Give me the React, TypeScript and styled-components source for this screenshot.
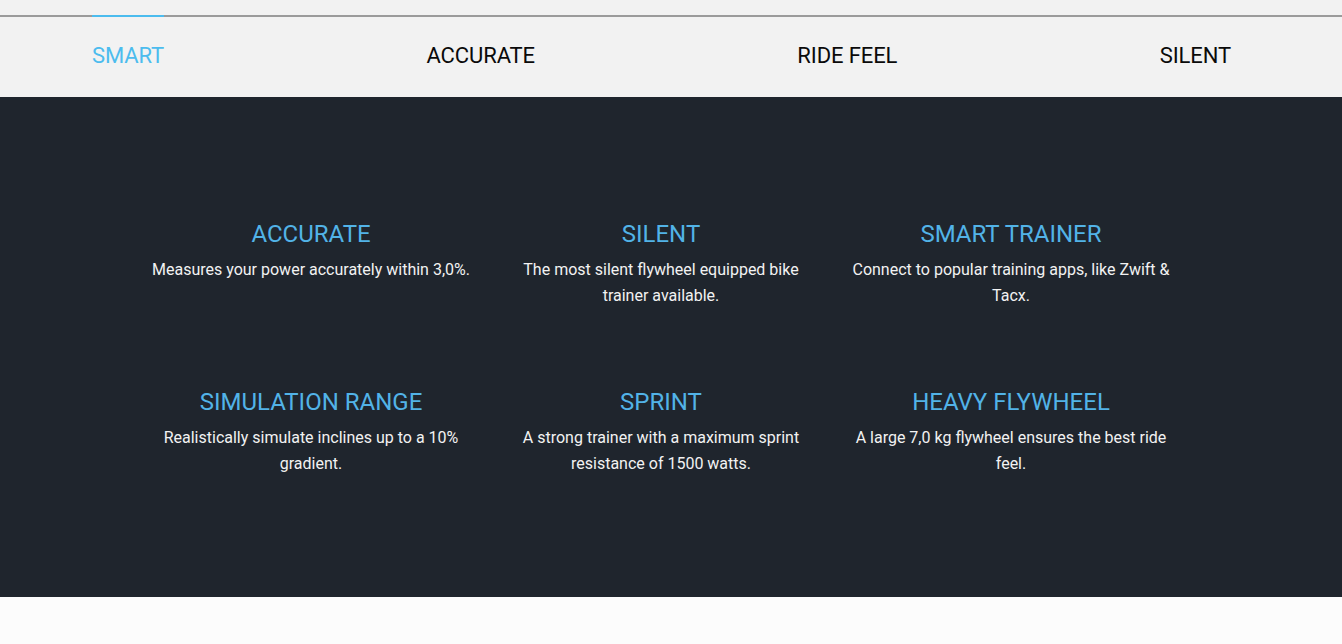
import * as React from 'react';
import styled, {createGlobalStyle} from 'styled-components';

const GlobalStyle = createGlobalStyle`
  html, body {
    margin: 0;
    padding: 0;
    background: #fcfcfc;
    font-family: Roboto, "Liberation Sans", Arial, sans-serif;
  }
`;

const TopStrip = styled.div`
  height: 15px;
  background: #f2f2f2;
`;

const TabBar = styled.nav`
  display: flex;
  justify-content: space-between;
  align-items: stretch;
  height: 80px;
  padding: 0 111px 0 92px;
  background: #f2f2f2;
  border-top: 2px solid #9b9b9b;
`;

const Tab = styled.a<{$active?: boolean}>`
  display: block;
  margin-top: -2px;
  padding-top: 26px;
  border-top: 2px solid ${p => (p.$active ? '#4cbcee' : 'transparent')};
  font-size: 22px;
  letter-spacing: -0.1px;
  line-height: 26px;
  color: ${p => (p.$active ? '#4cbcee' : '#0a0a0a')};
  text-decoration: none;
  cursor: pointer;
`;

const Features = styled.section`
  height: 500px;
  box-sizing: border-box;
  padding: 121px 0 0 136px;
  background: #1f252d;
`;

const Grid = styled.div`
  display: grid;
  grid-template-columns: repeat(3, 350px);
  grid-auto-rows: 168px;
`;

const Feature = styled.div`
  padding: 0 15px;
  text-align: center;
`;

const Title = styled.h3`
  margin: 0 0 7px;
  font-size: 24px;
  font-weight: 400;
  line-height: 32px;
  color: #52b3e7;
`;

const Text = styled.p`
  margin: 0;
  font-size: 16px;
  line-height: 26px;
  color: #f2f2f2;
`;

const tabs = ['SMART', 'ACCURATE', 'RIDE FEEL', 'SILENT'];

const features = [
  {title: 'ACCURATE', text: 'Measures your power accurately within 3,0%.'},
  {title: 'SILENT', text: 'The most silent flywheel equipped bike trainer available.'},
  {title: 'SMART TRAINER', text: 'Connect to popular training apps, like Zwift & Tacx.'},
  {title: 'SIMULATION RANGE', text: 'Realistically simulate inclines up to a 10% gradient.'},
  {title: 'SPRINT', text: 'A strong trainer with a maximum sprint resistance of 1500 watts.'},
  {title: 'HEAVY FLYWHEEL', text: 'A large 7,0 kg flywheel ensures the best ride feel.'},
];

export default function App() {
  const [active, setActive] = React.useState(0);

  return (
    <>
      <GlobalStyle />
      <TopStrip />
      <TabBar>
        {tabs.map((t, i) => (
          <Tab key={t} $active={i === active} onClick={() => setActive(i)}>
            {t}
          </Tab>
        ))}
      </TabBar>
      <Features>
        <Grid>
          {features.map(f => (
            <Feature key={f.title}>
              <Title>{f.title}</Title>
              <Text>{f.text}</Text>
            </Feature>
          ))}
        </Grid>
      </Features>
    </>
  );
}
